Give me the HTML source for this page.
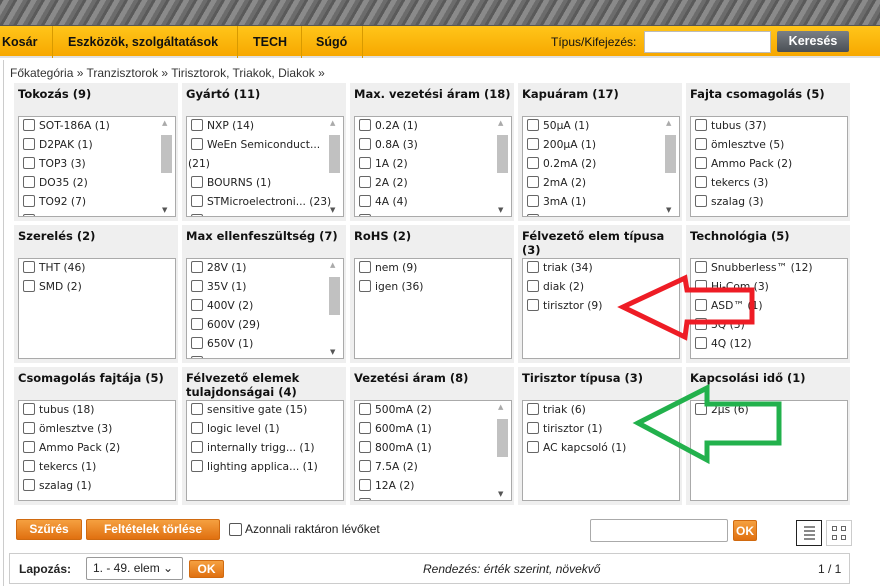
<!DOCTYPE html>
<html><head><meta charset="utf-8"><style>
*{margin:0;padding:0;box-sizing:border-box}
body{width:880px;height:586px;overflow:hidden;background:#fff;font-family:"DejaVu Sans",Verdana,sans-serif;font-size:10.7px;color:#222;position:relative}
.a{position:absolute}
.top{left:0;top:0;width:880px;height:26px;background:repeating-linear-gradient(120deg,#5a5a5a 0 3px,#8a8a8a 3px 8px,#6c6c6c 8px 12px);border-bottom:1px solid #555}
.nav{left:0;top:26px;width:880px;height:32px;background:linear-gradient(#ffc51a,#f7a800);border-bottom:2px solid #e0e0e0;font-family:"Liberation Sans",sans-serif;font-weight:bold;font-size:12.5px;color:#111}
.nav span{position:absolute;top:9px;white-space:nowrap}
.sep{position:absolute;top:0;width:1px;height:32px;background:#d89a00}
.p{position:absolute;background:#efefef;width:164px;height:138px}
.p h3{position:absolute;left:4px;top:4px;font-size:11.5px;font-weight:bold;line-height:14px;color:#111;width:160px}
.lb{position:absolute;left:4px;top:33px;width:158px;height:101px;background:#fff;border:1px solid #aaa;overflow:hidden}
.it{position:absolute;left:4px;height:14px;line-height:14px;white-space:nowrap}
.it i{display:inline-block;width:12px;height:12px;border:1px solid #666;border-radius:2px;vertical-align:-2px;margin-right:4px;background:#fff}
.sb{position:absolute;right:2px;top:2px;width:13px;height:95px}
.sb b{position:absolute;left:1px;top:16px;width:11px;height:38px;background:#c1c1c1}
.sb:before{content:"▲";position:absolute;top:0;left:2px;font-size:7px;color:#aaa}
.sb:after{content:"▼";position:absolute;bottom:0;left:2px;font-size:7px;color:#555}
.btn{position:absolute;background:linear-gradient(#f5a040,#e07010);color:#fff;font-family:"Liberation Sans",sans-serif;font-weight:bold;font-size:12px;border-radius:2px;text-align:center;border:1px solid #d06a10}
</style></head><body>
<div class="a top"></div>
<div class="a nav">
<span style="left:2px">Kosár</span><div class="sep" style="left:52px"></div>
<span style="left:68px">Eszközök, szolgáltatások</span><div class="sep" style="left:237px"></div>
<span style="left:253px">TECH</span><div class="sep" style="left:301px"></div>
<span style="left:316px">Súgó</span><div class="sep" style="left:362px"></div>
<span style="left:551px;font-weight:normal;font-size:12px">Típus/Kifejezés:</span>
<div class="a" style="left:644px;top:5px;width:127px;height:22px;background:#fff;border:1px solid #bbb"></div>
<div class="a" style="left:777px;top:5px;width:72px;height:21px;background:linear-gradient(#7a7f85,#4a4f55);color:#fff;border-radius:2px;text-align:center;line-height:21px">Keresés</div>
</div>
<div class="a" style="left:3px;top:60px;width:1px;height:526px;background:#ccc"></div>
<div class="a" style="left:10px;top:66px;font-family:'Liberation Sans',sans-serif;font-size:12px;color:#333">Főkategória » Tranzisztorok » Tirisztorok, Triakok, Diakok »</div>

<!-- Row 1 -->
<div class="p" style="left:14px;top:83px"><h3>Tokozás (9)</h3><div class="lb">
<div class="it" style="top:2px"><i></i>SOT-186A (1)</div><div class="it" style="top:21px"><i></i>D2PAK (1)</div><div class="it" style="top:40px"><i></i>TOP3 (3)</div><div class="it" style="top:59px"><i></i>DO35 (2)</div><div class="it" style="top:78px"><i></i>TO92 (7)</div><div class="it" style="top:97px"><i></i>TO220 (1)</div><div class="sb"><b></b></div></div></div>
<div class="p" style="left:182px;top:83px"><h3>Gyártó (11)</h3><div class="lb">
<div class="it" style="top:2px"><i></i>NXP (14)</div><div class="it" style="top:21px"><i></i>WeEn Semiconduct...</div><div class="it" style="top:40px;left:1px">(21)</div><div class="it" style="top:59px"><i></i>BOURNS (1)</div><div class="it" style="top:78px"><i></i>STMicroelectroni... (23)</div><div class="it" style="top:97px"><i></i>DIOTEC SEMICONDU</div><div class="sb"><b></b></div></div></div>
<div class="p" style="left:350px;top:83px"><h3>Max. vezetési áram (18)</h3><div class="lb">
<div class="it" style="top:2px"><i></i>0.2A (1)</div><div class="it" style="top:21px"><i></i>0.8A (3)</div><div class="it" style="top:40px"><i></i>1A (2)</div><div class="it" style="top:59px"><i></i>2A (2)</div><div class="it" style="top:78px"><i></i>4A (4)</div><div class="it" style="top:97px"><i></i>6A (1)</div><div class="sb"><b></b></div></div></div>
<div class="p" style="left:518px;top:83px"><h3>Kapuáram (17)</h3><div class="lb">
<div class="it" style="top:2px"><i></i>50µA (1)</div><div class="it" style="top:21px"><i></i>200µA (1)</div><div class="it" style="top:40px"><i></i>0.2mA (2)</div><div class="it" style="top:59px"><i></i>2mA (2)</div><div class="it" style="top:78px"><i></i>3mA (1)</div><div class="it" style="top:97px"><i></i>5mA (1)</div><div class="sb"><b></b></div></div></div>
<div class="p" style="left:686px;top:83px"><h3>Fajta csomagolás (5)</h3><div class="lb">
<div class="it" style="top:2px"><i></i>tubus (37)</div><div class="it" style="top:21px"><i></i>ömlesztve (5)</div><div class="it" style="top:40px"><i></i>Ammo Pack (2)</div><div class="it" style="top:59px"><i></i>tekercs (3)</div><div class="it" style="top:78px"><i></i>szalag (3)</div></div></div>

<!-- Row 2 -->
<div class="p" style="left:14px;top:225px"><h3>Szerelés (2)</h3><div class="lb">
<div class="it" style="top:2px"><i></i>THT (46)</div><div class="it" style="top:21px"><i></i>SMD (2)</div></div></div>
<div class="p" style="left:182px;top:225px"><h3>Max ellenfeszültség (7)</h3><div class="lb">
<div class="it" style="top:2px"><i></i>28V (1)</div><div class="it" style="top:21px"><i></i>35V (1)</div><div class="it" style="top:40px"><i></i>400V (2)</div><div class="it" style="top:59px"><i></i>600V (29)</div><div class="it" style="top:78px"><i></i>650V (1)</div><div class="it" style="top:97px"><i></i>700V (1)</div><div class="sb"><b></b></div></div></div>
<div class="p" style="left:350px;top:225px"><h3>RoHS (2)</h3><div class="lb">
<div class="it" style="top:2px"><i></i>nem (9)</div><div class="it" style="top:21px"><i></i>igen (36)</div></div></div>
<div class="p" style="left:518px;top:225px"><h3>Félvezető elem típusa (3)</h3><div class="lb">
<div class="it" style="top:2px"><i></i>triak (34)</div><div class="it" style="top:21px"><i></i>diak (2)</div><div class="it" style="top:40px"><i></i>tirisztor (9)</div></div></div>
<div class="p" style="left:686px;top:225px"><h3>Technológia (5)</h3><div class="lb">
<div class="it" style="top:2px"><i></i>Snubberless™ (12)</div><div class="it" style="top:21px"><i></i>Hi-Com (3)</div><div class="it" style="top:40px"><i></i>ASD™ (1)</div><div class="it" style="top:59px"><i></i>3Q (3)</div><div class="it" style="top:78px"><i></i>4Q (12)</div></div></div>

<!-- Row 3 -->
<div class="p" style="left:14px;top:367px"><h3>Csomagolás fajtája (5)</h3><div class="lb">
<div class="it" style="top:2px"><i></i>tubus (18)</div><div class="it" style="top:21px"><i></i>ömlesztve (3)</div><div class="it" style="top:40px"><i></i>Ammo Pack (2)</div><div class="it" style="top:59px"><i></i>tekercs (1)</div><div class="it" style="top:78px"><i></i>szalag (1)</div></div></div>
<div class="p" style="left:182px;top:367px"><h3>Félvezető elemek tulajdonságai (4)</h3><div class="lb">
<div class="it" style="top:2px"><i></i>sensitive gate (15)</div><div class="it" style="top:21px"><i></i>logic level (1)</div><div class="it" style="top:40px"><i></i>internally trigg... (1)</div><div class="it" style="top:59px"><i></i>lighting applica... (1)</div></div></div>
<div class="p" style="left:350px;top:367px"><h3>Vezetési áram (8)</h3><div class="lb">
<div class="it" style="top:2px"><i></i>500mA (2)</div><div class="it" style="top:21px"><i></i>600mA (1)</div><div class="it" style="top:40px"><i></i>800mA (1)</div><div class="it" style="top:59px"><i></i>7.5A (2)</div><div class="it" style="top:78px"><i></i>12A (2)</div><div class="it" style="top:97px"><i></i>16A (1)</div><div class="sb"><b></b></div></div></div>
<div class="p" style="left:518px;top:367px"><h3>Tirisztor típusa (3)</h3><div class="lb">
<div class="it" style="top:2px"><i></i>triak (6)</div><div class="it" style="top:21px"><i></i>tirisztor (1)</div><div class="it" style="top:40px"><i></i>AC kapcsoló (1)</div></div></div>
<div class="p" style="left:686px;top:367px"><h3>Kapcsolási idő (1)</h3><div class="lb">
<div class="it" style="top:2px"><i></i>2µs (6)</div></div></div>

<svg class="a" style="left:0;top:0" width="880" height="586">
<path d="M623,307 L685,278 L687,290 L752,290 L752,322 L687,322 L685,337 Z" fill="none" stroke="#ee1c25" stroke-width="5" stroke-linejoin="miter"/>
<path d="M638,423 L707,388 L707,404 L779,404 L779,443 L707,443 L707,460 Z" fill="none" stroke="#22b14c" stroke-width="5"/>
</svg>

<div class="btn" style="left:16px;top:519px;width:66px;height:21px;line-height:19px">Szűrés</div>
<div class="btn" style="left:86px;top:519px;width:134px;height:21px;line-height:19px">Feltételek törlése</div>
<div class="a" style="left:229px;top:523px;width:13px;height:13px;border:1px solid #555;border-radius:2px"></div>
<div class="a" style="left:245px;top:522px;font-family:'Liberation Sans',sans-serif;font-size:12px">Azonnali raktáron lévőket</div>
<div class="a" style="left:590px;top:519px;width:138px;height:23px;border:1px solid #aaa;border-radius:2px"></div>
<div class="btn" style="left:733px;top:520px;width:24px;height:21px;line-height:20px">OK</div>
<div class="a" style="left:796px;top:520px;width:26px;height:26px;border:1px solid #222">
<div class="a" style="left:7px;top:5px;width:11px;height:14px;background:repeating-linear-gradient(#888 0 2px,#fff 2px 4px)"></div></div>
<div class="a" style="left:826px;top:520px;width:26px;height:26px;border:1px solid #ccc">
<div class="a" style="left:5px;top:5px;width:5px;height:5px;border:1px solid #666"></div><div class="a" style="left:14px;top:5px;width:5px;height:5px;border:1px solid #666"></div><div class="a" style="left:5px;top:14px;width:5px;height:5px;border:1px solid #666"></div><div class="a" style="left:14px;top:14px;width:5px;height:5px;border:1px solid #666"></div></div>

<div class="a" style="left:9px;top:553px;width:841px;height:31px;border:1px solid #ccc"></div>
<div class="a" style="left:19px;top:562px;font-family:'Liberation Sans',sans-serif;font-weight:bold;font-size:12px">Lapozás:</div>
<div class="a" style="left:86px;top:557px;width:97px;height:23px;border:1px solid #999;border-radius:2px;font-family:'Liberation Sans',sans-serif;font-size:12px;line-height:21px;padding-left:6px">1. - 49. elem ⌄</div>
<div class="btn" style="left:189px;top:560px;width:35px;height:18px;line-height:17px">OK</div>
<div class="a" style="left:423px;top:562px;font-family:'Liberation Sans',sans-serif;font-style:italic;font-size:12px">Rendezés: érték szerint, növekvő</div>
<div class="a" style="left:818px;top:562px;font-family:'Liberation Sans',sans-serif;font-size:12px">1 / 1</div>
</body></html>
